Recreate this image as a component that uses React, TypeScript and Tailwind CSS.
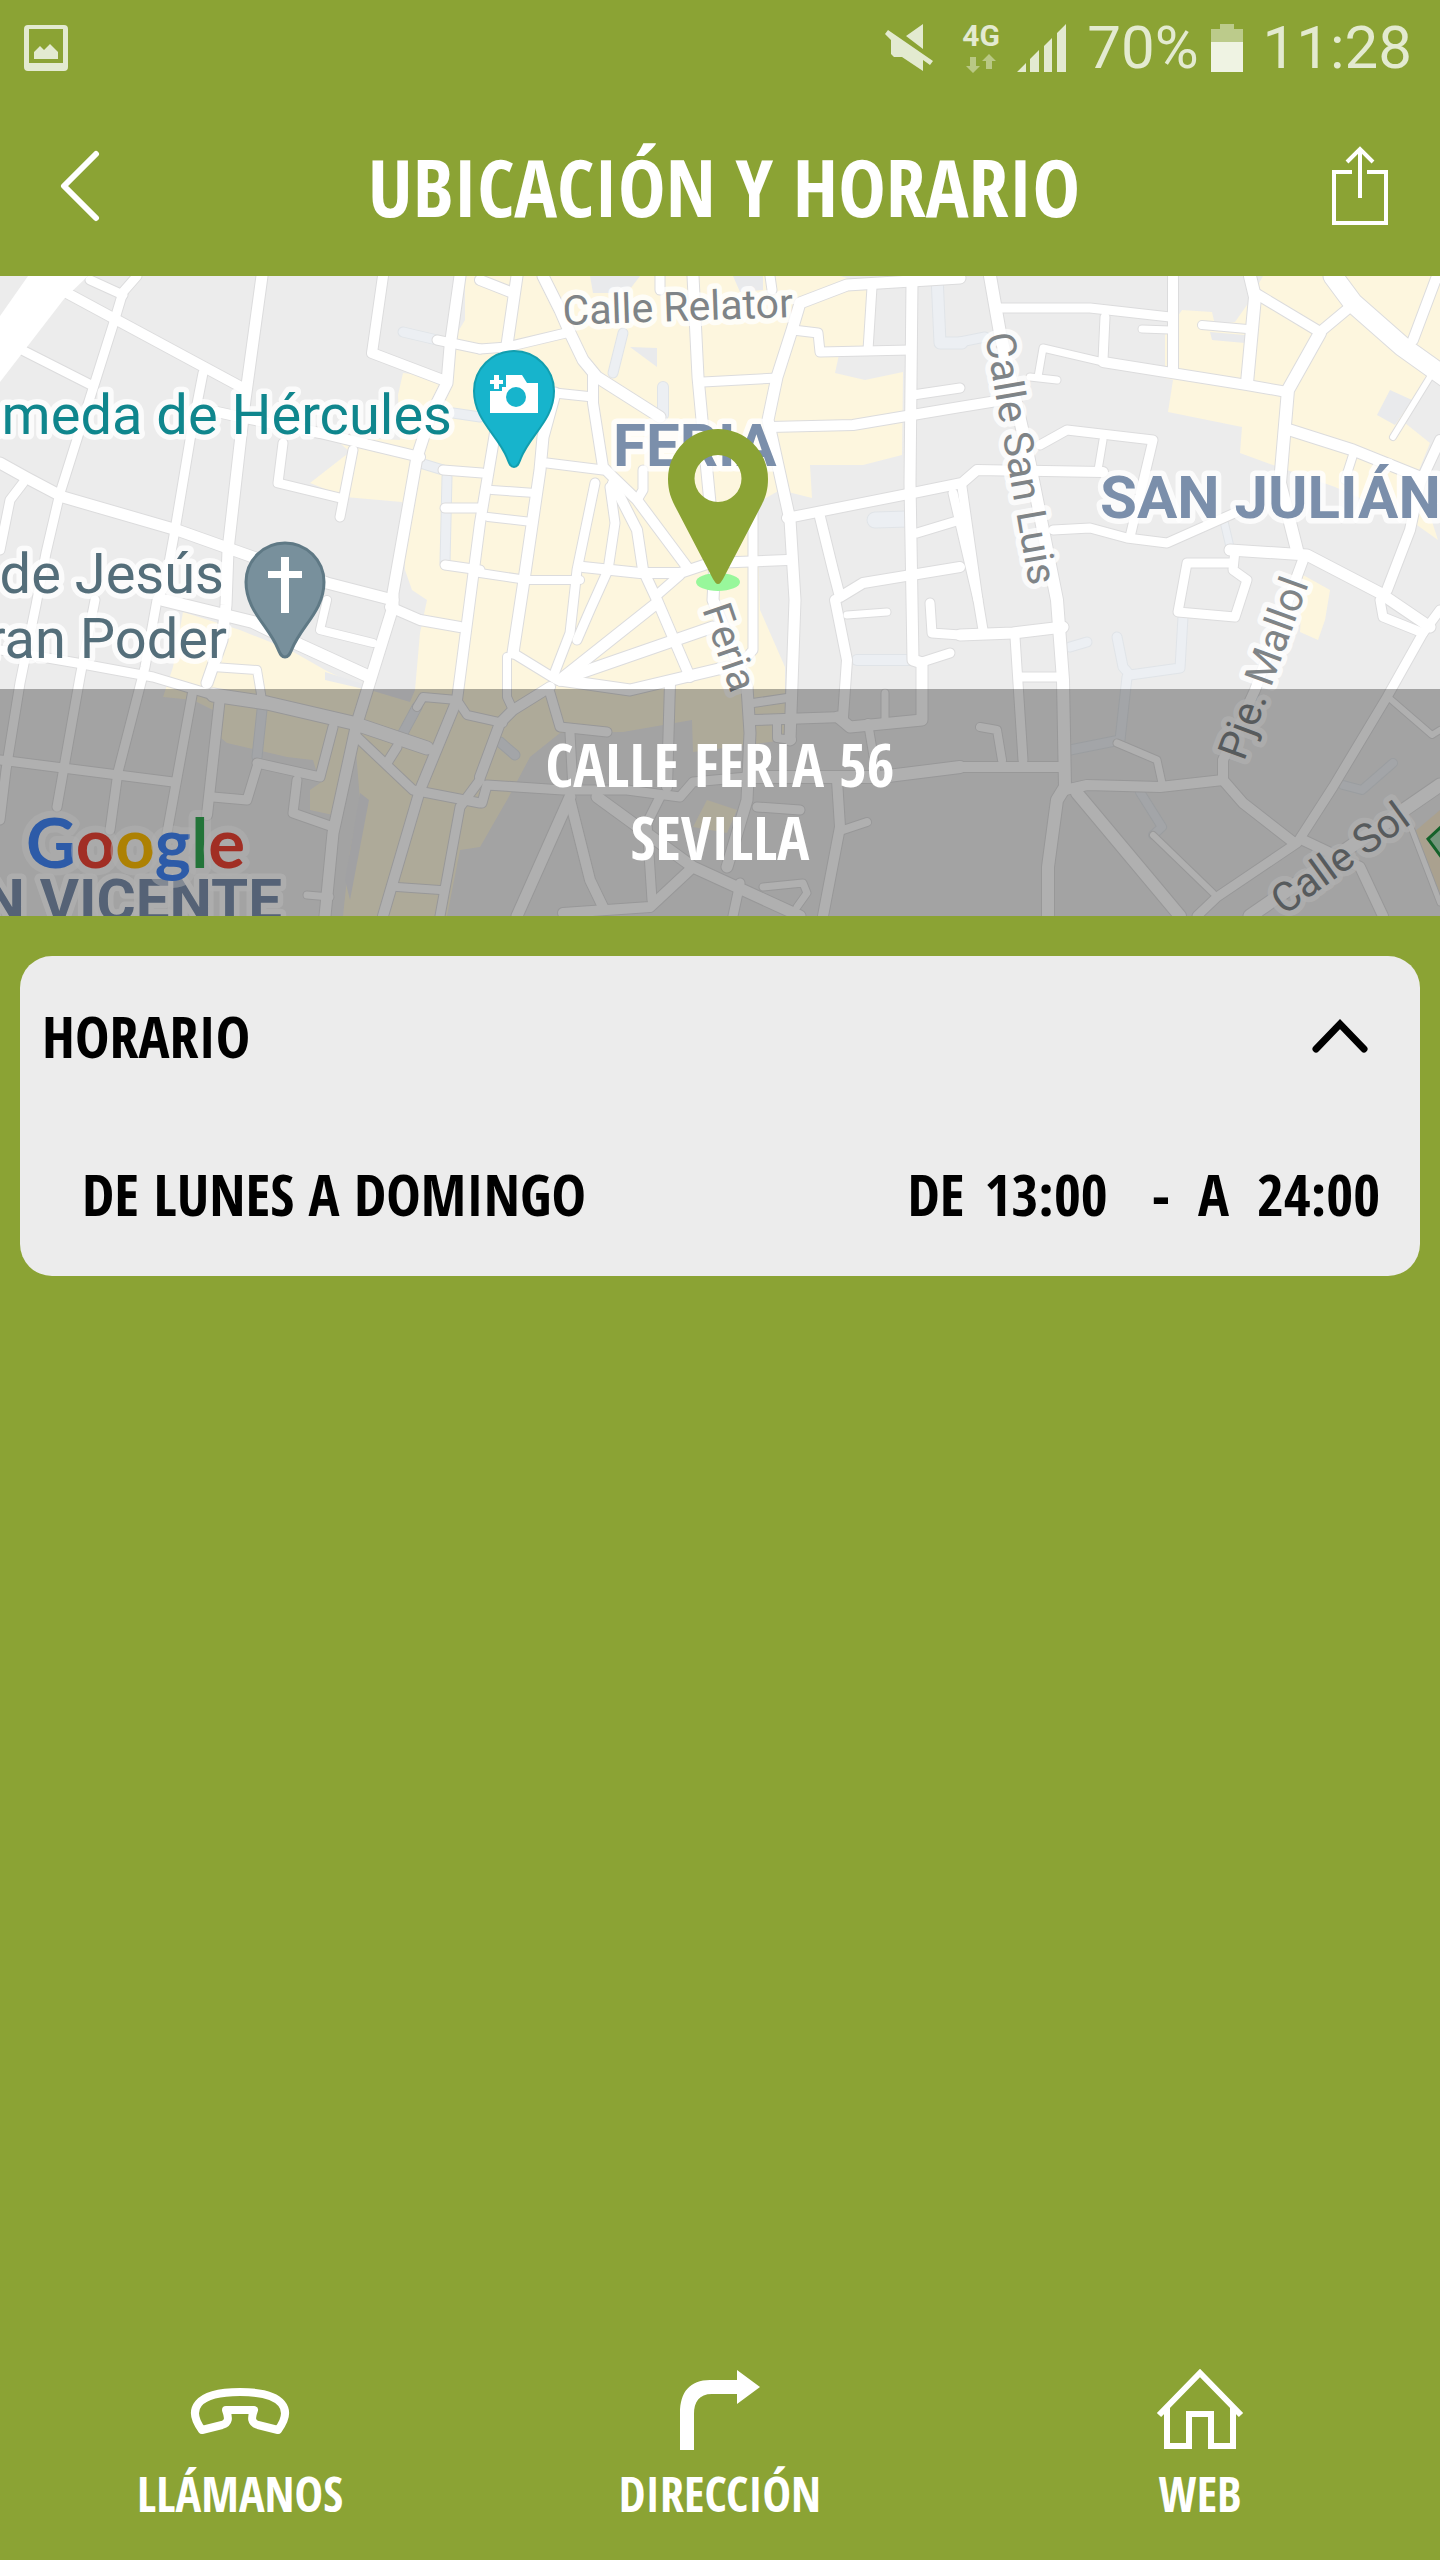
import React, { useState } from "react";

type Road = [width: number, points: string];

const commercial = [
  "465,280 465,320 447,350 443,378 403,373 398,395 400,440 333,437 350,452 342,458 310,483 345,497 402,502 405,570 412,590 427,600 420,633 415,690 370,690 355,740 360,800 350,850 343,916 447,916 460,850 480,847 507,800 530,757 560,733 623,732 692,720 693,752 785,740 785,667 760,610 757,503 780,490 812,498 810,465 863,465 902,455 903,372 865,380 835,373 840,350 873,347 877,287 840,276 465,276",
  "183,612 173,667 163,697 193,700 213,710 215,733 227,743 287,757 313,760 320,783 310,790 310,810 333,815 360,720 367,690 325,670 290,650 240,630",
  "1263,276 1440,276 1440,378 1428,380 1405,423 1430,443 1417,475 1438,540 1410,520 1335,487 1273,465 1240,453 1242,427 1168,412 1173,380 1165,378 1165,335 1182,310 1212,312 1215,325 1235,322 1247,305",
  "1303,575 1330,590 1325,620 1318,640 1300,632",
  "707,800 737,810 727,833 693,827",
];

const greyBlocks = [
  "590,276 640,276 627,293 593,293",
  "630,347 657,348 657,367",
  "733,276 763,276 763,290 740,292",
  "1390,390 1412,400 1395,425 1377,415",
  "1210,332 1245,335 1245,343 1212,340",
  "325,672 360,683 368,690 325,680",
  "370,690 415,690 410,702",
  "360,793 369,800 350,900 345,880",
];

const paths: Road[] = [
  [9, "403,332 437,340"],
  [9, "420,463 443,470"],
  [9, "447,477 445,563"],
  [9, "453,413 480,417"],
  [11, "937,276 940,343 962,343"],
  [15, "875,520 908,519"],
  [9, "623,333 613,373"],
  [10, "663,387 663,415"],
  [7, "1223,517 1230,547"],
  [9, "1070,647 1087,642"],
  [9, "1117,637 1123,667 1130,675 1180,668 1183,617"],
  [9, "1127,677 1120,740 1070,750"],
  [8, "1140,792 1162,827 1153,835"],
  [8, "1343,785 1362,790 1393,763"],
  [10, "857,660 910,660"],
  [9, "262,710 257,757"],
  [9, "403,733 417,707"],
  [9, "500,742 515,755"],
  [9, "960,342 985,337"],
];

const roads: Road[] = [
  [10, "65,292 115,319 243,388"],
  [9, "90,280 123,295"],
  [9, "137,276 123,292 114,322 60,493 46,553 36,605 20,683 6,770 0,820"],
  [9, "22,350 93,386"],
  [11, "262,276 245,400 228,550 226,605 222,640 207,683"],
  [10, "220,697 207,815"],
  [9, "203,373 190,440 175,530 165,585 157,600 145,667 118,772 110,830"],
  [11, "0,463 27,478 63,497 177,530 253,557 327,583 393,600"],
  [9, "23,483 10,500 0,550"],
  [10, "217,412 240,417 320,433 420,457"],
  [10, "383,276 372,353 443,380"],
  [11, "460,276 450,347 447,383 430,417 417,457 393,593 393,607 357,723 333,833 325,916"],
  [9, "437,340 480,349"],
  [9, "283,443 278,483 340,498"],
  [9, "353,450 340,517"],
  [9, "443,470 482,473"],
  [9, "445,565 480,570"],
  [9, "445,508 480,508"],
  [10, "495,433 480,523 470,600 457,700 420,790 383,916"],
  [11, "517,276 507,345 500,370"],
  [10, "480,280 513,293"],
  [11, "543,276 560,310 570,333 583,360 597,377 660,417"],
  [9, "480,349 507,347 570,332"],
  [10, "593,373 593,403 603,467 613,477 637,500 687,567"],
  [11, "555,393 543,437 540,470 523,587 513,653"],
  [9, "555,393 593,397"],
  [9, "547,463 603,470"],
  [8, "492,490 535,493"],
  [8, "488,517 532,522"],
  [8, "480,573 527,580 580,580"],
  [9, "595,483 577,570 570,633 553,677"],
  [9, "610,487 615,523 608,570 590,610 577,640"],
  [10, "613,483 637,530 643,570 657,600 690,677"],
  [10, "583,567 640,573 680,573 710,563 787,560"],
  [9, "643,470 643,490 637,500"],
  [9, "680,575 657,595"],
  [11, "693,276 698,377 702,420 710,503 715,560 713,600 747,687 750,733 747,800 727,867"],
  [9, "660,276 660,290"],
  [9, "770,276 772,290"],
  [9, "703,382 777,378"],
  [11, "960,278 847,285 800,303 792,330 777,377 768,420 790,520 795,600 790,740"],
  [9, "793,330 818,333 820,352 910,350"],
  [9, "872,287 868,350"],
  [11, "912,283 910,483 913,660 922,663 922,720 850,727 838,717"],
  [9, "913,395 960,388"],
  [10, "770,427 853,425 960,407 1003,400"],
  [10, "787,518 913,493 962,483 977,470 1103,472"],
  [10, "820,517 833,570 840,597 863,583 960,567"],
  [10, "835,600 847,660 843,717"],
  [9, "917,533 960,520"],
  [9, "953,493 978,600"],
  [9, "753,503 753,650 740,665"],
  [12, "990,276 1000,333 1027,450 1045,540 1057,600 1063,680 1065,787 1057,800 1048,867 1048,916"],
  [9, "1000,308 1090,308 1170,317"],
  [10, "1173,276 1173,370"],
  [9, "1105,317 1103,360"],
  [7, "1038,377 1043,348 1103,362"],
  [10, "1103,362 1247,385 1287,392"],
  [7, "1030,377 1057,380"],
  [7, "1142,329 1170,330"],
  [8, "1202,325 1247,329"],
  [12, "1250,276 1255,297 1247,383"],
  [10, "1255,293 1320,332 1350,307"],
  [12, "1320,333 1288,390 1280,483 1297,550"],
  [19, "1333,276 1353,303 1403,347 1445,377"],
  [10, "1437,276 1413,340"],
  [6, "1430,377 1393,437"],
  [11, "1290,430 1353,450 1420,477"],
  [10, "1440,440 1420,483 1410,530 1387,590"],
  [8, "1353,455 1345,480"],
  [9, "1040,445 1067,430 1153,440 1130,537"],
  [7, "1103,440 1098,470"],
  [9, "1053,530 1090,528 1127,538 1167,543 1237,512"],
  [11, "1230,550 1307,555 1380,593 1430,627"],
  [9, "1235,550 1233,570 1247,580 1235,617 1178,612 1187,563 1233,563"],
  [10, "1303,560 1293,587 1255,690 1223,760 1223,780 1243,803 1293,842"],
  [11, "960,635 1013,633 1063,627"],
  [9, "962,487 978,600 983,630"],
  [9, "1015,637 1023,760"],
  [9, "1020,677 1060,677"],
  [7, "1117,743 1157,760 1162,783"],
  [10, "960,767 1060,767"],
  [8, "980,727 997,730 1002,760"],
  [10, "1065,790 1087,785 1160,787 1223,780"],
  [12, "1077,793 1180,916"],
  [6, "1153,835 1213,893"],
  [9, "1423,633 1387,697 1333,787 1297,843 1217,897 1197,916"],
  [6, "1388,697 1432,735 1440,730"],
  [13, "1440,785 1250,916"],
  [10, "1303,840 1360,867 1383,916"],
  [5, "1407,817 1440,903"],
  [9, "1380,600 1383,617 1423,633 1440,610"],
  [9, "0,650 77,663 153,677 213,695"],
  [13, "213,695 267,703 353,723 427,748"],
  [9, "95,600 80,677 57,807"],
  [9, "193,690 167,833"],
  [12, "163,600 253,622 300,645 370,677"],
  [8, "213,667 257,670 262,700"],
  [9, "0,760 63,768 173,782"],
  [9, "257,763 320,777 333,727"],
  [9, "257,767 247,800 213,797"],
  [9, "297,780 293,813 333,827"],
  [9, "357,737 413,790 480,803"],
  [9, "397,747 387,763"],
  [9, "480,780 460,807 440,916"],
  [8, "397,887 440,890"],
  [7, "307,895 330,897"],
  [10, "390,607 420,620 460,627"],
  [8, "327,600 320,630 373,643"],
  [8, "417,707 423,697 457,700 467,715 503,723"],
  [9, "513,653 557,680"],
  [8, "507,657 507,697 513,710"],
  [10, "550,687 513,710 500,723 480,777"],
  [11, "560,680 657,603"],
  [11, "560,680 713,627"],
  [11, "560,680 630,690 727,667"],
  [9, "550,693 560,727 607,732"],
  [9, "570,733 573,790"],
  [10, "670,683 667,787"],
  [9, "482,803 487,785 563,790 627,790 680,797 693,782 747,777"],
  [12, "747,777 880,777 960,767"],
  [11, "570,797 517,916"],
  [10, "570,800 590,880 603,907"],
  [11, "597,797 693,867 800,916"],
  [10, "693,867 650,907 563,913"],
  [9, "660,797 647,823 652,900"],
  [9, "757,807 800,810"],
  [9, "740,883 733,916"],
  [7, "763,887 803,883 807,893 797,907"],
  [8, "753,703 787,698"],
  [10, "753,720 843,717"],
  [8, "777,720 777,738 792,740"],
  [8, "868,723 877,777"],
  [7, "885,693 885,720"],
  [10, "837,780 840,827 823,916"],
  [8, "843,830 867,822"],
  [9, "930,603 932,633 960,635"],
  [7, "847,615 887,612"],
  [9, "922,662 950,653"],
];

function Lines({ items, color, extra = 0 }: { items: Road[]; color: string; extra?: number }) {
  return (
    <g fill="none" stroke={color} strokeLinecap="round" strokeLinejoin="round">
      {items.map(([w, points], i) => (
        <polyline key={i} points={points} strokeWidth={w + extra} />
      ))}
    </g>
  );
}

function CityMap() {
  return (
    <svg viewBox="0 276 1440 640" preserveAspectRatio="xMidYMid slice" className="absolute inset-0 h-full w-full" role="img" aria-label="Mapa de Calle Feria, Sevilla">
      <rect x="0" y="276" width="1440" height="640" fill="#ececec" />
      {commercial.map((p) => <polygon key={p} points={p} fill="#fdf6de" />)}
      {greyBlocks.map((p) => <polygon key={p} points={p} fill="#e9eaec" />)}
      <polygon points="1440,810 1413,833 1440,893" fill="#f6ead0" />
      <polygon points="1442,826 1428,839 1442,858" fill="#a8dab5" stroke="#1e8e3e" strokeWidth="3" />
      <Lines items={paths} color="#e0e4e8" extra={2} />
      <Lines items={paths} color="#eceff3" />
      <Lines items={roads} color="#dcdcdd" extra={2} />
      <Lines items={roads} color="#ffffff" />
      <polygon points="28,276 0,316 0,382 64,299 88,276" fill="#ffffff" />

      <g fontFamily="Roboto, sans-serif" fontWeight="400" stroke="#ffffff" strokeOpacity="0.8" strokeWidth="11" strokeLinejoin="round" paintOrder="stroke">
        <g fill="#0f868d" fontSize="56" textAnchor="end">
          <text x="452" y="434">Alameda de Hércules</text>
        </g>
        <g fill="#546e7a" fontSize="56" textAnchor="end">
          <text x="224" y="593">de Jesús</text>
          <text x="227" y="658">Gran Poder</text>
        </g>
        <g fill="#7b8fab" fontSize="60" fontWeight="700">
          <text x="613" y="466">FERIA</text>
          <text x="1100" y="518">SAN JULIÁN</text>
          <text x="282" y="921" textAnchor="end">SAN VICENTE</text>
        </g>
        <g fill="#7f8487" fontSize="41">
          <text transform="translate(563 325) rotate(-2)">Calle Relator</text>
          <text transform="translate(985 335) rotate(80)">Calle San Luis</text>
          <text transform="translate(702 609) rotate(71)">Feria</text>
          <text transform="translate(1244 762) rotate(-70)">Pje. Mallol</text>
          <text transform="translate(1284 916) rotate(-36)">Calle Sol</text>
        </g>
      </g>

      <path d="M514 467c-4 0-5-4-7-9-9-23-33-38-33-67a40 40 0 0 1 80 0c0 29-24 44-33 67-2 5-3 9-7 9z" fill="#17b4cc" stroke="#129eaf" strokeWidth="2" />
      <path fill="#ffffff" d="M494 375h5v5h4v4h-4v5h-5v-5h-4v-4h4zM506 375h16l5 8h11v30h-48v-22h12v-4h4z" />
      <circle cx="516" cy="397" r="10" fill="#17b4cc" />
      <path d="M285 657c-4 0-5-4-7-8-9-23-32-38-32-67a39 39 0 0 1 78 0c0 29-23 44-32 67-2 4-3 8-7 8z" fill="#78909c" stroke="#5f7985" strokeWidth="3" />
      <path d="M281 557h8v14h13v7h-13v35h-8v-35h-13v-7h13z" fill="#ffffff" />
      <ellipse cx="718" cy="582" rx="22" ry="9" fill="#98f79b" />
      <path fillRule="evenodd" d="M718 584c-2 0-3-2-5-5l-36-69c-6-11-9-19-9-31a50 50 0 0 1 100 0c0 12-3 20-9 31l-36 69c-2 3-3 5-5 5zM718 455a23 23 0 1 0 0 47 23 23 0 0 0 0-47z" fill="#8ba334" />

      <text x="26" y="868" fontFamily="Lato, sans-serif" fontSize="69" fontWeight="700" stroke="#ffffff" strokeOpacity="0.5" strokeWidth="14" strokeLinejoin="round" paintOrder="stroke">
        <tspan fill="#4285f4">G</tspan><tspan fill="#ea4335">o</tspan><tspan fill="#fbbc05">o</tspan><tspan fill="#4285f4">g</tspan><tspan fill="#34a853">l</tspan><tspan fill="#ea4335">e</tspan>
      </text>
    </svg>
  );
}

function StatusBar() {
  return (
    <div className="flex h-24 items-center justify-between pl-6 pr-7 font-[Roboto,sans-serif] text-[60px] leading-none font-normal text-[#e3ead0]">
      <svg className="h-12 w-11" viewBox="0 0 44 48" fill="currentColor" aria-hidden="true">
        <path fillRule="evenodd" d="M4 1h36a4 4 0 0 1 4 4v38a4 4 0 0 1-4 4H4a4 4 0 0 1-4-4V5a4 4 0 0 1 4-4zm1 4v34h34V5z" />
        <path d="M10 35v-7l6-6 4 4 6-6 8 8v7z" />
      </svg>
      <div className="flex items-center">
        <svg className="mr-7 h-12 w-12" viewBox="0 0 48 48" fill="currentColor" aria-hidden="true">
          <path d="M38 0v25L21 12zM3 6l45 31-3 4-7-5v11L17 33H9l-3-3V16l-6-6z" />
        </svg>
        <div className="mr-4 flex w-10 flex-col items-center gap-1">
          <span className="text-[30px] leading-[26px] font-bold">4G</span>
          <svg className="h-5 w-8" viewBox="0 0 32 20" fill="#b9c885" aria-hidden="true">
            <path d="M5 4h6v9h4l-7 7-7-7h4zM21 16V8h-4l7-7 7 7h-4v8z" />
          </svg>
        </div>
        <svg className="mr-5 h-12 w-[50px]" viewBox="0 0 50 48" fill="currentColor" aria-hidden="true">
          <path d="M0 48l9-9v9zM13 35l9-9v22h-9zM27 22l8-8v34h-8zM40 9l9-9v48h-9z" />
        </svg>
        <span>70%</span>
        <svg className="mr-5 ml-3 h-12 w-8" viewBox="0 0 32 48" aria-hidden="true">
          <path d="M9 0h14v5h9v13H0V5h9z" fill="#bccb8b" />
          <path d="M0 18h32v30H0z" fill="#eff3e3" />
        </svg>
        <span>11:28</span>
      </div>
    </div>
  );
}

function PhoneIcon() {
  return (
    <svg className="h-[84px] w-[100px]" viewBox="0 0 100 84" fill="none" stroke="currentColor" strokeWidth="8" strokeLinejoin="round" aria-hidden="true">
      <path d="M12 62C-3 42 5 24 50 24s53 18 38 38l-20-5c-7-2-7-7-4-15H36c3 8 3 13-4 15z" />
    </svg>
  );
}

function TurnIcon() {
  return (
    <svg className="h-[84px] w-20" viewBox="0 0 80 84" fill="currentColor" aria-hidden="true">
      <path d="M0 82V45C0 24 10 12 30 12h27V2l23 17-23 17V26H32C19 26 14 34 14 46v36z" />
    </svg>
  );
}

function HomeIcon() {
  return (
    <svg className="h-[84px] w-[88px]" viewBox="0 0 88 84" fill="none" stroke="currentColor" strokeWidth="6" aria-hidden="true">
      <path d="M3 47L44 5l41 42" />
      <path d="M11 40v38h22V46h22v32h22V40" />
    </svg>
  );
}

const actions = [
  { label: "LLÁMANOS", href: "#llamanos", Icon: PhoneIcon },
  { label: "DIRECCIÓN", href: "#direccion", Icon: TurnIcon },
  { label: "WEB", href: "#web", Icon: HomeIcon },
];

export default function App() {
  const [open, setOpen] = useState(true);
  return (
    <div className="flex min-h-screen flex-col bg-[#8ba334] font-['Open_Sans_Condensed','Roboto_Condensed',Roboto,sans-serif] font-bold text-white">
      <StatusBar />
      <header className="flex h-[180px] items-center justify-between pl-[60px] pr-[52px]">
        <button type="button" aria-label="Volver" className="flex w-14">
          <svg className="h-[72px] w-10" viewBox="0 0 40 72" fill="none" stroke="currentColor" strokeWidth="6" strokeLinecap="round" strokeLinejoin="round">
            <path d="M36 4L4 36l32 32" />
          </svg>
        </button>
        <h1 className="text-[80px] leading-none whitespace-nowrap">UBICACIÓN Y HORARIO</h1>
        <button type="button" aria-label="Compartir">
          <svg className="h-20 w-14" viewBox="0 0 56 80" fill="none" stroke="currentColor" strokeWidth="4">
            <path d="M20 26H2v51h52V26H35M28 52V4M15 16L28 3l13 13" />
          </svg>
        </button>
      </header>

      <section className="relative flex h-[640px] flex-col justify-end overflow-hidden">
        <CityMap />
        <address className="relative flex h-[227px] flex-col items-center justify-center bg-black/31 pb-1 text-[60px] leading-[73px] not-italic">
          <span>CALLE FERIA 56</span>
          <span>SEVILLA</span>
        </address>
      </section>

      <main className="flex-1 px-5 pt-10">
        <section className="min-h-40 rounded-[32px] bg-[#ececec] text-[58px] leading-none text-black">
          <button type="button" aria-expanded={open} onClick={() => setOpen(!open)} className="flex h-40 w-full items-center justify-between pl-[22px] pr-[52px]">
            <span>HORARIO</span>
            <svg className={open ? "h-9 w-14" : "h-9 w-14 rotate-180"} viewBox="0 0 56 36" fill="none" stroke="currentColor" strokeWidth="7" strokeLinecap="round" aria-hidden="true">
              <path d="M4 31L28 6l24 25" />
            </svg>
          </button>
          {open && (
            <dl className="flex h-40 items-center justify-between pb-1 pl-[62px] pr-10">
              <dt>DE LUNES A DOMINGO</dt>
              <dd className="flex gap-11">
                <span className="flex gap-5"><span>DE</span> <span>13:00</span></span>
                <span className="flex gap-7"><span>-</span> <span>A</span> <span>24:00</span></span>
              </dd>
            </dl>
          )}
        </section>
      </main>

      <nav className="grid grid-cols-3 pb-9 text-[48px] leading-[60px]">
        {actions.map(({ label, href, Icon }) => (
          <a key={label} href={href} className="flex flex-col items-center gap-3">
            <Icon />
            <span>{label}</span>
          </a>
        ))}
      </nav>
    </div>
  );
}
